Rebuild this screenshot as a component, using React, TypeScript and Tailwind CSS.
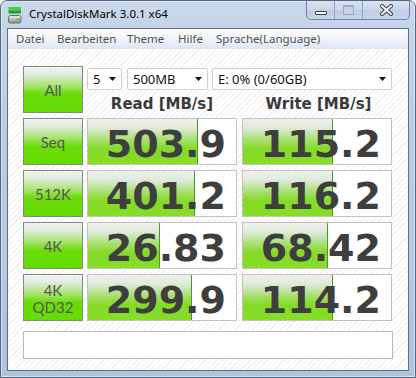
import React from "react";

const ROWS = [
  { key: "seq", label: ["Seq"], read: "503.9", write: "115.2", readBar: 110, writeBar: 90 },
  { key: "512k", label: ["512K"], read: "401.2", write: "116.2", readBar: 107, writeBar: 90 },
  { key: "4k", label: ["4K"], read: "26.83", write: "68.42", readBar: 72, writeBar: 85 },
  { key: "qd32", label: ["4K", "QD32"], read: "299.9", write: "114.2", readBar: 104, writeBar: 90 },
];

const MENU = [
  { text: "Datei", w: "w-[41px]" },
  { text: "Bearbeiten", w: "w-[70px]" },
  { text: "Theme", w: "w-[51px]" },
  { text: "Hilfe", w: "w-[38px]" },
  { text: "Sprache(Language)", w: "" },
];

function AppIcon() {
  return (
    <svg width="14" height="18" viewBox="0 0 14 18">
      <defs>
        <linearGradient id="drv" x1="0" y1="0" x2="0" y2="1">
          <stop offset="0" stopColor="#f2f2f2" />
          <stop offset="1" stopColor="#8c8c8c" />
        </linearGradient>
      </defs>
      <rect x="0.5" y="1" width="12.5" height="3.5" fill="#46d046" />
      <rect x="0.5" y="4.5" width="12.5" height="3" fill="#249a24" />
      <rect x="0.5" y="9.5" width="12.5" height="7.5" rx="2" fill="url(#drv)" stroke="#6a6a6a" />
      <rect x="8.5" y="12.5" width="3" height="2" fill="#3fcf3f" />
    </svg>
  );
}

function CloseGlyph() {
  return (
    <svg width="13" height="12" viewBox="0 0 13 12">
      <path d="M2 2 L11 10 M11 2 L2 10" stroke="#3b3f46" strokeWidth="4" strokeLinecap="round" />
      <path d="M2 2 L11 10 M11 2 L2 10" stroke="#ffffff" strokeWidth="2" strokeLinecap="round" />
    </svg>
  );
}

function Arrow() {
  return (
    <svg width="7" height="4" viewBox="0 0 7 4">
      <path d="M0 0 H7 L3.5 4 Z" fill="#111" />
    </svg>
  );
}

function Combo({ text, width }: { text: string; width: string }) {
  return (
    <div
      className={`${width} h-[22px] bg-white border border-[#cfcfcf] rounded-[2px] flex items-center pl-[5px] pr-[5px] text-[13px] text-[#111] font-['Noto_Sans',sans-serif]`}
    >
      <span className="flex-1 leading-none">{text}</span>
      <Arrow />
    </div>
  );
}

function TestButton({ lines }: { lines: string[] }) {
  return (
    <div className="h-[47px] border border-[#7d8c7d] bg-[linear-gradient(to_bottom,#f3f3f3_0%,#e2ece0_16%,#a6e46c_42%,#6cdc0c_60%,#64dc00_100%)] flex flex-col items-center justify-center pt-[2px] text-[#555555] font-['Lato',sans-serif] text-[15px] leading-[17px]">
      {lines.map((l) => (
        <span key={l}>{l}</span>
      ))}
    </div>
  );
}

function ValueCell({ value, bar, extra }: { value: string; bar: number; extra?: string }) {
  return (
    <div className={`relative h-[47px] w-[150px] border border-[#c2c2c2] bg-white ${extra ?? ""}`}>
      <div
        className="absolute left-0 top-0 bottom-0 border-r border-[#4e9a1e] bg-[linear-gradient(to_bottom,#eef0ec_0%,#e0eadb_20%,#a8e070_46%,#84da26_66%,#86de28_100%)]"
        style={{ width: bar }}
      />
      <div className="relative h-full flex items-center justify-end pr-[10px] pt-[4px] font-['DejaVu_Sans',sans-serif] font-bold text-[38px] leading-none text-[#3e3e3e]">
        {value}
      </div>
    </div>
  );
}

export default function App() {
  return (
    <div className="w-[416px] h-[378px] bg-white">
      <div className="w-full h-full flex flex-col rounded-t-[7px] border border-[#56677d] bg-[linear-gradient(to_bottom,#c9d8eb_0%,#bacde5_30%,#aec4df_100%)] shadow-[inset_0_0_0_1px_rgba(255,255,255,0.45)]">
        {/* title bar */}
        <div className="h-[27px] flex items-start">
          <div className="ml-[7px] mt-[5px]">
            <AppIcon />
          </div>
          <span className="ml-[7px] mt-[5px] text-[11.5px] leading-[16px] text-black font-['Noto_Sans',sans-serif]">
            CrystalDiskMark 3.0.1 x64
          </span>
          <div className="ml-auto mr-[5px] flex h-[19px] border border-t-0 border-[#6e83a3] rounded-b-[5px] overflow-hidden bg-[linear-gradient(to_bottom,#d9e4f1_0%,#c9d7ea_50%,#bccde4_51%,#c6d6eb_100%)]">
            <div className="w-[27px] flex justify-center pt-[10px]">
              <div className="w-[12px] h-[4px] bg-white border border-[#3b3f46] rounded-[1px]" />
            </div>
            <div className="w-[28px] border-l border-[#8fa2bf] flex justify-center pt-[4px]">
              <div className="w-[11px] h-[10px] border border-[#97a9c3] border-t-2 bg-[#c7d4e6]" />
            </div>
            <div className="w-[47px] border-l border-[#8fa2bf] flex justify-center pt-[3px]">
              <CloseGlyph />
            </div>
          </div>
        </div>

        {/* client area */}
        <div className="flex-1 mx-[6px] mb-[6px] border border-[#5f6f84] flex flex-col bg-white">
          <div className="h-[20px] flex items-center pl-[8px] bg-[linear-gradient(to_bottom,#fdfdfe_0%,#eef3f9_60%,#dde6f2_100%)] border-b border-[#dce5f1] text-[11.5px] text-[#505050] font-['Noto_Sans',sans-serif]">
            {MENU.map((m) => (
              <span key={m.text} className={`${m.w} whitespace-nowrap`}>
                {m.text}
              </span>
            ))}
          </div>

          <div className="flex-1 flex flex-col pl-[15px] pt-[17px] bg-[repeating-linear-gradient(135deg,#ffffff_0px,#ffffff_3px,#f0f0f0_3px,#f0f0f0_4px)]">
            <div className="grid grid-cols-[60px_150px_151px] gap-x-[4px] gap-y-[5px]">
              <TestButton lines={["All"]} />
              <div className="col-span-2 flex flex-col">
                <div className="flex mt-[2px]">
                  <Combo text="5" width="w-[36px]" />
                  <div className="ml-[5px]">
                    <Combo text="500MB" width="w-[81px]" />
                  </div>
                  <div className="ml-[4px]">
                    <Combo text="E: 0% (0/60GB)" width="w-[180px]" />
                  </div>
                </div>
                <div className="grid grid-cols-[150px_151px] gap-x-[4px] mt-[5px] font-['DejaVu_Sans',sans-serif] font-bold text-[15px] leading-[18px] text-[#3a3a3a]">
                  <span className="text-center">Read [MB/s]</span>
                  <span className="text-center pl-[4px]">Write [MB/s]</span>
                </div>
              </div>

              {ROWS.map((r) => (
                <React.Fragment key={r.key}>
                  <TestButton lines={r.label} />
                  <ValueCell value={r.read} bar={r.readBar} />
                  <ValueCell value={r.write} bar={r.writeBar} extra="ml-[1px]" />
                </React.Fragment>
              ))}
            </div>

            <div className="mt-[10px] w-[370px] h-[28px] border border-[#b9b9b9] bg-white" />
          </div>
        </div>
      </div>
    </div>
  );
}
